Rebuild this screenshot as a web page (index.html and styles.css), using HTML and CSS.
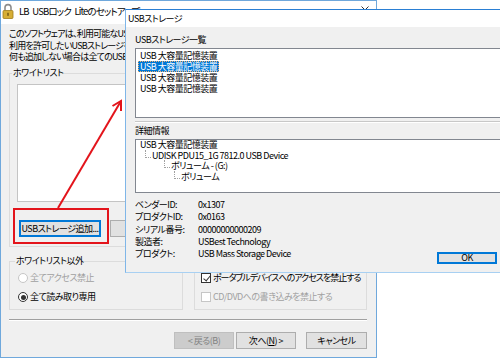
FILE: index.html
```html
<!DOCTYPE html>
<html lang="ja">
<head>
  <meta charset="UTF-8" />
  <title>LB USBロック Liteのセットアップ</title>
  <link rel="stylesheet" href="styles.css">
</head>
<body>
  <div class="desk">

    <!-- setup wizard (behind) -->
    <div class="win setup">
      <div class="titlebar">
        <svg class="lock" width="12" height="16" viewBox="0 0 12 16">
          <path d="M3 7.5V4.6a3 3 0 0 1 6 0v2.9" fill="none" stroke="#8c8c8c" stroke-width="1.6"/>
          <rect x="1" y="7.5" width="10" height="8" rx="1" fill="#d6ae36" stroke="#a07c1a" stroke-width="0.8"/>
          <rect x="5.3" y="9.8" width="1.4" height="3" fill="#6b5210"/>
        </svg>
        <span class="title">LB USBロック Liteのセットアップ</span>
        <svg class="chev" width="8" height="5" viewBox="0 0 8 5">
          <path d="M0.5 0.5L4 4L7.5 0.5" fill="none" stroke="#333" stroke-width="1"/>
        </svg>
      </div>

      <div class="setup-body">
        <div class="intro">
          <p>このソフトウェアは、利用可能なUSBストレージをホワイトリストで管理します。</p>
          <p>利用を許可したいUSBストレージをホワイトリストに追加してください。</p>
          <p>何も追加しない場合は全てのUSBストレージの利用が制限されます。</p>
        </div>

        <fieldset class="grp whitelist">
          <legend>ホワイトリスト</legend>
          <div class="wl-box"></div>
          <div class="wl-btns">
            <button class="btn btn-add">USBストレージ追加...</button>
            <button class="btn btn-del">削除</button>
          </div>
        </fieldset>

        <div class="opts">
          <fieldset class="grp other">
            <legend>ホワイトリスト以外</legend>
            <div class="opt disabled"><span class="radio"></span>全てアクセス禁止</div>
            <div class="opt"><span class="radio on"></span>全て読み取り専用</div>
          </fieldset>
          <fieldset class="grp extra">
            <legend>その他</legend>
            <div class="opt tight"><span class="check on"></span>ポータブルデバイスへのアクセスを禁止する</div>
            <div class="opt disabled"><span class="check"></span>CD/DVDへの書き込みを禁止する</div>
          </fieldset>
        </div>

        <div class="sep"></div>

        <div class="nav">
          <button class="btn btn-back" disabled>&lt; 戻る(B)</button>
          <button class="btn btn-next">次へ(<u>N</u>) &gt;</button>
          <button class="btn btn-cancel">キャンセル</button>
        </div>
      </div>
    </div>

    <!-- USB storage dialog (front) -->
    <div class="win dialog">
      <div class="dlg-title">USBストレージ</div>
      <div class="dlg-body">
        <div class="caption">USBストレージ一覧</div>
        <ul class="devlist">
          <li><span>USB 大容量記憶装置</span></li>
          <li class="sel"><span>USB 大容量記憶装置</span></li>
          <li><span>USB 大容量記憶装置</span></li>
          <li><span>USB 大容量記憶装置</span></li>
        </ul>

        <div class="divider"></div>

        <div class="caption">詳細情報</div>
        <ul class="tree">
          <li class="lv0">USB 大容量記憶装置</li>
          <li class="lv1">UDISK PDU15_1G 7812.0 USB Device</li>
          <li class="lv2">ボリューム - (G:)</li>
          <li class="lv3">ボリューム</li>
        </ul>

        <div class="props">
          <dl>
            <dt>ベンダーID:</dt><dd>0x1307</dd>
            <dt>プロダクトID:</dt><dd>0x0163</dd>
            <dt>シリアル番号:</dt><dd>00000000000209</dd>
            <dt>製造者:</dt><dd>USBest Technology</dd>
            <dt>プロダクト:</dt><dd>USB Mass Storage Device</dd>
          </dl>
          <button class="btn btn-ok">OK</button>
        </div>
      </div>
    </div>

    <!-- red annotation -->
    <svg class="annot" width="500" height="358" viewBox="0 0 500 358">
      <rect x="14" y="209" width="94" height="34" fill="none" stroke="#e3141b" stroke-width="2"/>
      <path d="M58 208L121 101" fill="none" stroke="#e3141b" stroke-width="2"/>
      <path d="M112.5 106L121 101L121 111" fill="none" stroke="#e3141b" stroke-width="2" stroke-linejoin="miter"/>
    </svg>
  </div>
</body>
</html>
```

FILE: styles.css
```css
* {
  box-sizing: border-box;
}
body {
  margin: 0;
  background: #fff;
  font-family: "Noto Sans CJK JP", "Noto Sans", sans-serif;
  font-size: 9px;
  letter-spacing: -0.5px;
  font-feature-settings: "palt" 1;
  color: #000;
}
p, ul, dl, dd {
  margin: 0;
  padding: 0;
}
ul {
  list-style: none;
}
.tight {
  letter-spacing: -1px;
}
.desk {
  position: relative;
  width: 500px;
  height: 358px;
  overflow: hidden;
}
.win {
  position: absolute;
  background: #f0f0f0;
  overflow: hidden;
}

/* setup window */
.setup {
  left: 0;
  top: 0;
  width: 377px;
  height: 358px;
  border: 1px solid #6fa8dc;
}
.titlebar {
  height: 23px;
  background: #fff;
  display: flex;
  align-items: flex-start;
  padding: 2px 0 0 1px;
}
.lock {
  flex: none;
}
.title {
  margin-left: 5px;
  font-size: 9.5px;
  line-height: 16px;
  letter-spacing: -0.9px;
  word-spacing: 2.5px;
}
.chev {
  margin: 3px 0 0 auto;
  margin-right: 7px;
}
.setup-body {
  padding: 4px 9px 0 8px;
}
.intro p {
  white-space: nowrap;
  line-height: 11.5px;
  letter-spacing: -0.8px;
}
.grp {
  margin: 0;
  border: 1px solid #dcdcdc;
  min-width: 0;
}
.grp legend {
  padding: 0 1px;
  line-height: 12px;
}
.whitelist {
  margin-top: 4.5px;
  padding: 0 7px 9px;
}
.whitelist legend {
  margin-left: -5px;
}
.wl-box {
  margin-top: 5px;
  height: 118px;
  background: #fff;
  border: 1px solid #c4c4c4;
}
.wl-btns {
  display: flex;
  gap: 9px;
  margin: 18px 0 0 2px;
}
.btn {
  font: inherit;
  letter-spacing: inherit;
  font-feature-settings: "palt" 1;
  color: #000;
  height: 17px;
  padding: 0;
  background: #e1e1e1;
  border: 1px solid #adadad;
  line-height: 15px;
  text-align: center;
  white-space: nowrap;
}
.btn-add {
  width: 82px;
  border: 2px solid #0078d7;
  line-height: 13px;
}
.btn-del {
  width: 75px;
}

.opts {
  display: flex;
  gap: 11px;
  margin-top: 8px;
}
.other {
  width: 174px;
  padding: 0 0 6px 8px;
}
.other legend {
  margin-left: -3px;
}
.extra {
  width: 173px;
  padding: 0 0 6px 6px;
}
.opt {
  display: flex;
  align-items: center;
  height: 12px;
  line-height: 12px;
  white-space: nowrap;
}
.opt + .opt {
  margin-top: 7px;
}
.opt:first-of-type {
  margin-top: 5px;
}
.other .opt {
  gap: 2px;
}
.extra .opt {
  gap: 2px;
}
.opt.disabled {
  color: #a0a0a0;
}
.radio {
  width: 10px;
  height: 10px;
  border: 1px solid #333;
  border-radius: 50%;
  background: #fff;
  display: flex;
  align-items: center;
  justify-content: center;
}
.radio.on::after {
  content: "";
  width: 5px;
  height: 5px;
  border-radius: 50%;
  background: #333;
}
.check {
  width: 10px;
  height: 10px;
  border: 1px solid #333;
  background: #fff;
  position: relative;
}
.check.on::after {
  content: "";
  position: absolute;
  left: 2.5px;
  top: 0;
  width: 3px;
  height: 6px;
  border: solid #333;
  border-width: 0 1.3px 1.3px 0;
  transform: rotate(40deg);
}
.disabled .radio,
.disabled .check {
  border-color: #c6c6c6;
}

.sep {
  margin-top: 9px;
  height: 2px;
  border-top: 1px solid #a0a0a0;
  border-bottom: 1px solid #fff;
}
.nav {
  display: flex;
  justify-content: flex-end;
  margin-top: 11px;
}
.btn-back {
  width: 60px;
  background: #cccccc;
  border-color: #bfbfbf;
  color: #838383;
}
.btn-next {
  width: 60px;
  margin-left: 2px;
}
.btn-cancel {
  width: 61px;
  margin-left: 10px;
}

/* storage dialog */
.dialog {
  left: 125px;
  top: 9px;
  width: 390px;
  height: 264px;
  border: 1px solid #2a7fd4;
  border-left-color: #7fb6e8;
  border-bottom-color: #a8d0f2;
}
.dlg-title {
  height: 17px;
  background: #fff;
  padding-left: 2px;
  line-height: 17px;
}
.dlg-body {
  padding: 7px 9px 0;
}
.caption {
  line-height: 12px;
}
.devlist {
  margin-top: 2px;
  height: 70px;
  background: #fff;
  border: 1px solid #828790;
  padding: 1px 0 0 2px;
}
.devlist li {
  height: 11px;
  line-height: 11px;
}
.devlist li span {
  display: inline-block;
  padding: 0 2px;
}
.devlist li.sel span {
  background: #0078d7;
  color: #fff;
  outline: 1px dotted #f0b070;
  outline-offset: -1px;
}
.divider {
  margin: 3px 0 2px;
  height: 2px;
  border-top: 1px solid #c8c8c8;
  border-bottom: 1px solid #fff;
}
.tree {
  margin-top: 2px;
  height: 54px;
  background: #fff;
  border: 1px solid #828790;
  padding: 0 0 0 4px;
}
.tree li {
  height: 10.7px;
  line-height: 10.7px;
  position: relative;
  white-space: nowrap;
}
.tree li.lv1,
.tree li.lv2,
.tree li.lv3 {
  padding-left: 7px;
}
.tree li.lv1::before,
.tree li.lv2::before,
.tree li.lv3::before {
  content: "";
  position: absolute;
  left: 0;
  top: -1px;
  width: 5px;
  height: 7px;
  border-left: 1px dotted #a0a0a0;
  border-bottom: 1px dotted #a0a0a0;
}
.tree li.lv1 {
  margin-left: 5px;
}
.tree li.lv2 {
  margin-left: 24px;
}
.tree li.lv3 {
  margin-left: 34px;
}
.props {
  margin-top: 6px;
  display: flex;
  justify-content: space-between;
  align-items: flex-end;
}
.props dl {
  display: grid;
  grid-template-columns: 63px auto;
  grid-auto-rows: 12.3px;
  line-height: 12.3px;
}
.btn-ok {
  width: 60px;
  height: 12px;
  line-height: 8px;
  border: 2px solid #0078d7;
  margin: 0 8px -4px 0;
}

.annot {
  position: absolute;
  left: 0;
  top: 0;
  pointer-events: none;
}
```
